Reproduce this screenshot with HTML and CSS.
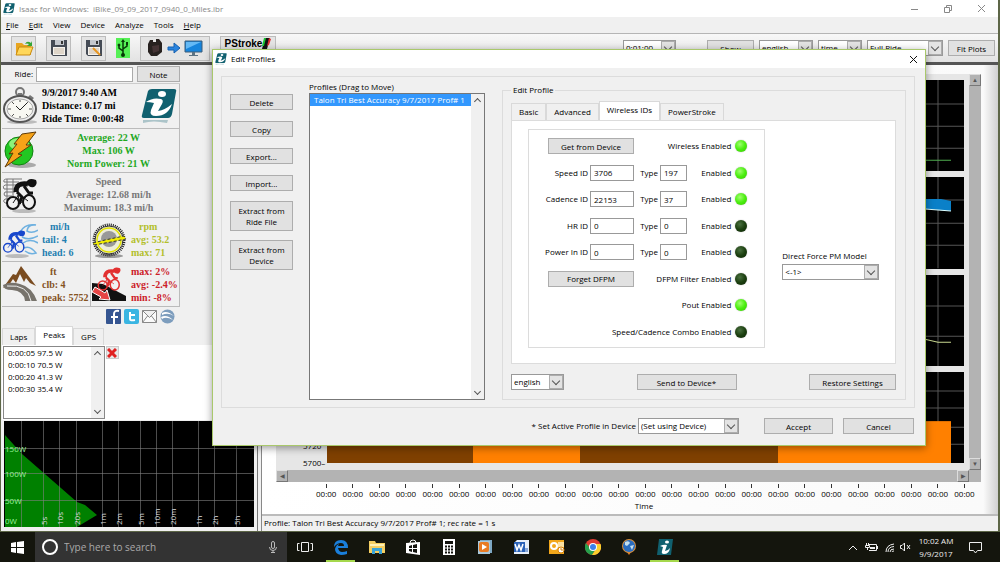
FILE: index.html
```html
<!DOCTYPE html>
<html lang="en">
<head>
    <meta charset="UTF-8">
    <meta name="viewport" content="width=device-width, initial-scale=1.0">
    <title>Isaac for Windows</title>
    <link rel="stylesheet" href="styles.css">
</head>
<body>
    <svg class="defs" aria-hidden="true">
        <symbol id="ibike" viewBox="0 0 36 36">
            <path d="M7 3Q8 1 11 1H33Q36 1 35 4L31 26Q30 30 27 30H3Q0 30 1 27Z" fill="#10606f"/>
            <ellipse cx="21" cy="6" rx="4" ry="3" fill="#fff"/>
            <path d="M5 14Q12 9 20 11Q23 12 21 16L17 23Q24 22 31 16Q27 28 15 28Q8 28 10 22L13 15Q9 14 5 14Z" fill="#fff"/>
            <path d="M2 32H27L26 35Q12 32 2 35Z" fill="#10606f" opacity=".3"/>
        </symbol>
        <symbol id="rider" viewBox="0 0 36 36">
            <g fill="none" stroke="currentColor">
                <ellipse cx="11" cy="26" rx="6" ry="6" stroke-width="2"/>
                <ellipse cx="27" cy="25" rx="6" ry="7" stroke-width="2"/>
                <path d="M11 26L17 17L26 24M16 18L18 27L27 16" stroke-width="1"/>
                <path d="M15 15L20 20L17 27M22 9L27 16H31" stroke-width="3"/>
                <path d="M14 15Q14 5 26 7" stroke-width="5"/>
            </g>
            <path d="M24 6Q26 0 34 3Q36 7 32 10Q27 11 24 6Z" fill="currentColor"/>
        </symbol>
        <symbol id="floppy" viewBox="0 0 18 18">
            <path d="M1 1H17V17H3L1 15Z" fill="#454b55"/>
            <path d="M5 1H14V6H5Z" fill="#c4c8ce"/>
            <path d="M11 2H13V5H11Z" fill="#333"/>
            <path d="M3 8H15V16H3Z" fill="#f4f2ee"/>
            <path d="M4 10H14M4 12H14M4 14H14" stroke="#c9b9a5"/>
        </symbol>
    </svg>

    <div class="window">
        <header class="titlebar">
            <svg class="app-icon"><use href="#ibike"/></svg>
            <span class="title">Isaac for Windows:&nbsp; iBike_09_09_2017_0940_0_Miles.ibr</span>
            <svg class="window-controls" viewBox="0 0 80 12" fill="none" stroke="#888">
                <path d="M3 6.500H10"/>
                <path d="M36.500 4.500H41.500V9.500H36.500ZM38.500 4.500V2.500H43.500V7.500H41.500"/>
                <path d="M70 2L77 9M77 2L70 9"/>
            </svg>
        </header>

        <nav class="menubar">
            <a href="#"><u>F</u>ile</a>
            <a href="#"><u>E</u>dit</a>
            <a href="#">View</a>
            <a href="#">Device</a>
            <a href="#">Analyze</a>
            <a href="#">Tools</a>
            <a href="#"><u>H</u>elp</a>
        </nav>

        <div class="toolbar">
            <button class="tool" aria-label="Open">
                <svg width="20" height="18" viewBox="0 0 20 18">
                    <path d="M2 4H8L10 6H17V16H2Z" fill="#e8a520"/>
                    <path d="M2 16L5 8H19L16 16Z" fill="#ffd75a" stroke="#c98a10"/>
                    <path d="M11 5Q13 1 17 4L18 2V7H13L15 5Q13 4 11 5" fill="#35a535"/>
                </svg>
            </button>
            <button class="tool" aria-label="Save"><svg width="18" height="18"><use href="#floppy"/></svg></button>
            <button class="tool" aria-label="Save as">
                <svg width="18" height="18" viewBox="0 0 18 18"><use href="#floppy"/><path d="M8 9L15 16" stroke="#e89520" stroke-width="2"/></svg>
            </button>
            <svg class="usb" viewBox="0 0 14 20" fill="none" stroke="#073807">
                <path d="M7 3V16M7 13L3 10V7M7 11L11 8V6" stroke-width="1.500"/>
                <path d="M7 1L9 4H5ZM10 4H12V7H10Z" fill="#073807" stroke="none"/>
                <circle cx="7" cy="17" r="2" fill="#073807" stroke="none"/>
                <circle cx="3" cy="7" r="1" fill="#073807"/>
            </svg>
            <button class="tool tool-wide" aria-label="Download ride">
                <svg width="56" height="20" viewBox="0 0 56 20">
                    <path d="M3 2H6V4H9V1H12L15 5V14L10 18H4L1 14V6Z" fill="#27211f"/>
                    <path d="M5 8L12 7V13L6 15Z" fill="#443334"/>
                    <path d="M21 9H27V5L33 10L27 15V12H21Z" fill="#2a84df" stroke="#1560b0"/>
                    <path d="M38 3H55V14H38Z" fill="#1684dc" stroke="#3d5d78"/>
                    <path d="M39 4H54L39 11Z" fill="#64b9f5"/>
                    <path d="M45 14H48V17H51V18H42V17H45Z" fill="#5c7384"/>
                </svg>
            </button>
            <button class="pstroke">PStroke
                <svg width="9" height="11" viewBox="0 0 9 11"><path d="M3 0H8L5 11H0Z" fill="#111"/><path d="M2 0H4L2 8H0Z" fill="#19c832"/><path d="M7 0L9 1L7 7L5 8Z" fill="#e03030"/></svg>
            </button>
            <div class="toolbar-right">
                <span class="select zoom-time"><select aria-label="Zoom"><option>0:01:00</option></select></span>
                <button class="btn show">Show</button>
                <span class="select units"><select aria-label="Units"><option>english</option></select></span>
                <span class="select axis-type"><select aria-label="Axis"><option>time</option></select></span>
                <span class="select range"><select aria-label="Range"><option>Full Ride</option></select></span>
                <button class="btn fit">Fit Plots</button>
            </div>
        </div>

        <main class="workspace">
            <aside class="sidebar">
                <div class="ride-row">
                    <label for="ride">Ride:</label>
                    <input id="ride" type="text">
                    <button class="btn">Note</button>
                </div>

                <div class="stats">
                    <section class="stat">
                        <svg class="stat-icon" viewBox="0 0 36 38">
                            <ellipse cx="20" cy="35" rx="15" ry="2" fill="#bbb"/>
                            <circle cx="18" cy="5" r="4" fill="none" stroke="#777" stroke-width="2"/>
                            <path d="M16 6H20V11H16ZM28 8L32 11L30 13L26 10Z" fill="#777"/>
                            <ellipse cx="18" cy="22" rx="16" ry="13" fill="#eee" stroke="#555" stroke-width="2"/>
                            <ellipse cx="18" cy="22" rx="13" ry="10" fill="#f8f8f2" stroke="#aaa"/>
                            <path d="M18 13V15M18 29V31M6 22H9M27 22H30M10 15L12 17M26 15L24 17M10 29L12 27M26 29L24 27" stroke="#555"/>
                            <path d="M18 23L14 19M18 23L25 16" stroke="#222"/>
                        </svg>
                        <div class="stat-text left">9/9/2017 9:40 AM<br>Distance: 0.17 mi<br>Ride Time: 0:00:48</div>
                        <svg class="brand"><use href="#ibike"/></svg>
                    </section>
                    <section class="stat power">
                        <svg class="stat-icon" viewBox="0 0 36 38">
                            <ellipse cx="20" cy="34" rx="14" ry="3" fill="#aaa"/>
                            <circle cx="17" cy="20" r="14" fill="#22c722" stroke="#128012"/>
                            <ellipse cx="17" cy="13" rx="10" ry="6" fill="#8df27a"/>
                            <path d="M20 3L34 1L24 14H29L16 23L20 24L3 36L11 22L7 23L15 13H12Z" fill="#f6a318" stroke="#5e3a08"/>
                        </svg>
                        <div class="stat-text">Average: 22 W<br>Max: 106 W<br>Norm Power: 21 W</div>
                    </section>
                    <section class="stat speed">
                        <svg class="stat-icon" viewBox="0 0 36 38">
                            <path d="M20 3H5Q1 3 2 6H17M15 9H3Q0 10 2 13H15M13 16H3Q1 18 3 20H10M8 23H3Q0 25 3 27H6M5 3V27M11 3V20" fill="none" stroke="#777"/>
                            <ellipse cx="22" cy="35" rx="12" ry="2" fill="#bbb"/>
                            <use href="#rider" class="black"/>
                        </svg>
                        <div class="stat-text">Speed<br>Average: 12.68 mi/h<br>Maximum: 18.3 mi/h</div>
                    </section>
                    <section class="stat wind">
                        <svg class="stat-icon" viewBox="0 0 36 38">
                            <ellipse cx="15" cy="35" rx="12" ry="2" fill="#bbb"/>
                            <path d="M18 11Q23 2 34 4Q26 3 25 10Q30 13 36 9M20 16Q27 20 36 15M21 22Q28 17 36 22M22 27Q28 24 34 32Q28 34 23 30" fill="none" stroke="#6fb1e0" stroke-width="1.500"/>
                            <use href="#rider" class="blue" x="-2" y="6" width="26" height="30"/>
                        </svg>
                        <div class="stat-text left"><span class="unit">mi/h</span>tail: 4<br>head: 6</div>
                    </section>
                    <section class="stat cadence">
                        <svg class="stat-icon" viewBox="0 0 36 38">
                            <ellipse cx="18" cy="35" rx="14" ry="2" fill="#999"/>
                            <circle cx="18" cy="19" r="15" fill="none" stroke="#222" stroke-width="3" stroke-dasharray="1 1"/>
                            <circle cx="18" cy="19" r="14" fill="#ededda" stroke="#333"/>
                            <circle cx="18" cy="19" r="12" fill="none" stroke="#e2e200" stroke-width="1.500"/>
                            <circle cx="18" cy="18" r="8" fill="#999"/>
                            <path d="M2 22L14 19L33 15L35 18L20 21L3 24Z" fill="#f0ec00" stroke="#333" stroke-dasharray="3 2"/>
                        </svg>
                        <div class="stat-text left"><span class="unit">rpm</span>avg: 53.2<br>max: 71</div>
                    </section>
                    <section class="stat climb">
                        <svg class="stat-icon" viewBox="0 0 36 38">
                            <path d="M1 23L11 9L14 10L19 1L34 21L28 18L24 13L22 17L18 9L14 18L11 14L7 20Z" fill="#7a4c20"/>
                            <path d="M1 20Q8 16 18 19Q30 22 35 36H23Q22 26 10 25Q1 25 1 20Z" fill="#77736c"/>
                            <path d="M5 21Q26 19 29 36" fill="none" stroke="#eee"/>
                        </svg>
                        <div class="stat-text left"><span class="unit">ft</span>clb: 4<br>peak: 5752</div>
                    </section>
                    <section class="stat grade">
                        <svg class="stat-icon" viewBox="0 0 36 38">
                            <path d="M1 18L12 19L35 31V36H1Z" fill="#111"/>
                            <use href="#rider" class="red" y="1" width="34" height="27"/>
                            <path d="M4 22L14 28L16 25L19 35L8 34L10 32L1 27Z" fill="#e64545" stroke="#fff"/>
                        </svg>
                        <div class="stat-text left">max: 2%<br>avg: -2.4%<br>min: -8%</div>
                    </section>
                </div>

                <div class="share">
                    <a href="#" aria-label="Facebook"><svg viewBox="0 0 15 15"><rect width="15" height="15" rx="1" fill="#355591"/><path d="M13 2Q8 1 8 5V15M5 8H12" stroke="#fff" stroke-width="2" fill="none"/></svg></a>
                    <a href="#" aria-label="Twitter"><svg viewBox="0 0 15 15"><rect width="15" height="15" rx="2" fill="#3ab5e2"/><path d="M6 3V10Q6 12 11 11M6 6H11" stroke="#fff" stroke-width="2" fill="none"/></svg></a>
                    <a href="#" aria-label="Mail"><svg viewBox="0 0 15 15"><path d="M.5 1.500H14.500V13.500H.5ZL7.500 8.500L14.500 1.500M.5 13.500L5.500 7M14.500 13.500L9.500 7" fill="#fafafa" stroke="#888"/></svg></a>
                    <a href="#" aria-label="Google Earth"><svg viewBox="0 0 15 15"><circle cx="7.500" cy="7.500" r="7" fill="#7d9dbd"/><path d="M2 4Q7 1 14 7Q8 3 2 6ZM1 8Q7 5 13 11Q6 7 2 10Z" fill="#fff"/></svg></a>
                </div>

                <div class="tabs side-tabs">
                    <button class="tab">Laps</button>
                    <button class="tab active">Peaks</button>
                    <button class="tab">GPS</button>
                </div>
                <div class="peaks">
                    <div class="listbox">
                        <ul>
                            <li>0:00:05 97.5 W</li>
                            <li>0:00:10 70.5 W</li>
                            <li>0:00:20 41.3 W</li>
                            <li>0:00:30 35.4 W</li>
                        </ul>
                        <div class="scroll"><i class="up"></i><i class="down"></i></div>
                    </div>
                    <button class="remove" aria-label="Remove"><svg viewBox="0 0 10 10"><path d="M1 1L9 9M9 1L1 9" stroke="#e02222" stroke-width="3"/></svg></button>
                </div>

                <svg class="power-chart" viewBox="0 0 250 106">
                    <rect width="250" height="106" fill="#000"/>
                    <path d="M1 14L18 33L73 81L81 84L93 94L73 106H1Z" fill="#008000"/>
                    <path d="M17.500 0V106M39.500 0V106M55.500 0V106M72.500 0V106M98.500 0V106M114.500 0V106M136.500 0V106M152.500 0V106M168.500 0V106M194.500 0V106M210.500 0V106M232.500 0V106M0 27.500H250M0 52.500H250M0 79.500H250" stroke="#808080" stroke-opacity=".6"/>
                    <g fill="#9cf59c">
                        <text x="1" y="31">150W</text>
                        <text x="1" y="56">100W</text>
                        <text x="1" y="83">50W</text>
                        <text x="1" y="103">0W</text>
                    </g>
                    <g fill="#ddd">
                        <text transform="translate(43 104) rotate(-90)">5s</text>
                        <text transform="translate(59 104) rotate(-90)">10s</text>
                        <text transform="translate(76 104) rotate(-90)">20s</text>
                        <text transform="translate(102 104) rotate(-90)">1m</text>
                        <text transform="translate(118 104) rotate(-90)">2m</text>
                        <text transform="translate(140 104) rotate(-90)">5m</text>
                        <text transform="translate(156 104) rotate(-90)">10m</text>
                        <text transform="translate(172 104) rotate(-90)">20m</text>
                        <text transform="translate(198 104) rotate(-90)">1h</text>
                        <text transform="translate(214 104) rotate(-90)">2h</text>
                        <text transform="translate(236 104) rotate(-90)">5h</text>
                    </g>
                </svg>
            </aside>

            <section class="content">
                <div class="plots-frame">
                    <div class="plots-row">
                        <div class="plots">
                            <svg viewBox="0 0 637 91" preserveAspectRatio="none">
                                <path d="M0 24H637M0 46H637M0 68H637M611 0V91" stroke="#555"/>
                                <path d="M0 80H624" stroke="#4fae4f"/>
                            </svg>
                            <svg viewBox="0 0 637 91" preserveAspectRatio="none">
                                <path d="M0 23H637M0 46H637M0 68H637M611 0V91" stroke="#555"/>
                                <path d="M0 22H614L624 24V34L600 32H0Z" fill="#0a80c8"/>
                                <path d="M598 32L624 34" stroke="#dff"/>
                            </svg>
                            <svg viewBox="0 0 637 91" preserveAspectRatio="none">
                                <path d="M0 31H637M0 61H637M611 0V91" stroke="#555"/>
                                <path d="M0 64H598L611 67H624" stroke="#c8d890" fill="none"/>
                            </svg>
                            <svg viewBox="0 0 637 91" preserveAspectRatio="none">
                                <path d="M0 19H637M0 36H637M0 55H637M0 72H637M611 0V91" stroke="#555"/>
                                <rect y="49" width="146" height="42" fill="#7f4000"/>
                                <rect x="146" y="49" width="107" height="42" fill="#ff8000"/>
                                <rect x="253" y="49" width="198" height="42" fill="#7f4000"/>
                                <rect x="451" y="49" width="173" height="42" fill="#ff8000"/>
                            </svg>
                            <span class="y-label">5700–</span>
                            <span class="y-label upper">5720</span>
                        </div>
                        <div class="vscroll"><i>▲</i><i>▼</i></div>
                    </div>
                    <div class="hscroll"><i>◀</i><i>▶</i></div>
                </div>
                <div class="time-axis">
                    <span>00:00</span><span>00:00</span><span>00:00</span><span>00:00</span><span>00:00</span>
                    <span>00:00</span><span>00:00</span><span>00:00</span><span>00:00</span><span>00:00</span>
                    <span>00:00</span><span>00:00</span><span>00:00</span><span>00:00</span><span>00:00</span>
                    <span>00:00</span><span>00:00</span><span>00:00</span><span>00:00</span><span>00:00</span>
                    <span>00:00</span><span>00:00</span><span>00:00</span><span>00:00</span><span>00:00</span>
                </div>
                <div class="axis-title">Time</div>
                <footer class="statusbar">Profile: Talon Tri Best Accuracy 9/7/2017 Prof# 1; rec rate = 1 s</footer>
            </section>
        </main>
    </div>

    <div class="dialog" role="dialog" aria-labelledby="dialog-title">
        <header class="dialog-title">
            <svg class="app-icon"><use href="#ibike"/></svg>
            <span id="dialog-title">Edit Profiles</span>
            <button class="close" aria-label="Close"><svg viewBox="0 0 9 9"><path d="M1 1L8 8M8 1L1 8" stroke="#111"/></svg></button>
        </header>

        <div class="dialog-body">
            <div class="profile-actions">
                <button class="btn">Delete</button>
                <button class="btn">Copy</button>
                <button class="btn">Export...</button>
                <button class="btn">Import...</button>
                <button class="btn tall">Extract from<br>Ride File</button>
                <button class="btn tall">Extract from<br>Device</button>
            </div>

            <div class="profiles">
                <h2>Profiles (Drag to Move)</h2>
                <div class="listbox">
                    <ul>
                        <li class="selected">Talon Tri Best Accuracy 9/7/2017 Prof# 1</li>
                    </ul>
                    <div class="scroll"><i class="up"></i><i class="down"></i></div>
                </div>
            </div>

            <fieldset class="edit-profile">
                <legend>Edit Profile</legend>
                <div class="tabs">
                    <button class="tab">Basic</button>
                    <button class="tab">Advanced</button>
                    <button class="tab active">Wireless IDs</button>
                    <button class="tab">PowerStroke</button>
                </div>
                <div class="tab-page">
                    <form class="wireless">
                        <button type="button" class="btn wide">Get from Device</button>
                        <label class="led-label" for="wireless-on">Wireless Enabled</label>
                        <input class="led" type="checkbox" id="wireless-on" checked>

                        <label for="speed-id">Speed ID</label>
                        <input type="text" id="speed-id" value="3706">
                        <label for="speed-type">Type</label>
                        <input type="text" id="speed-type" value="197">
                        <label class="led-label" for="speed-on">Enabled</label>
                        <input class="led" type="checkbox" id="speed-on" checked>

                        <label for="cadence-id">Cadence ID</label>
                        <input type="text" id="cadence-id" value="22153">
                        <label for="cadence-type">Type</label>
                        <input type="text" id="cadence-type" value="37">
                        <label class="led-label" for="cadence-on">Enabled</label>
                        <input class="led" type="checkbox" id="cadence-on" checked>

                        <label for="hr-id">HR ID</label>
                        <input type="text" id="hr-id" value="0">
                        <label for="hr-type">Type</label>
                        <input type="text" id="hr-type" value="0">
                        <label class="led-label" for="hr-on">Enabled</label>
                        <input class="led" type="checkbox" id="hr-on">

                        <label for="power-id">Power In ID</label>
                        <input type="text" id="power-id" value="0">
                        <label for="power-type">Type</label>
                        <input type="text" id="power-type" value="0">
                        <label class="led-label" for="power-on">Enabled</label>
                        <input class="led" type="checkbox" id="power-on">

                        <button type="button" class="btn wide">Forget DFPM</button>
                        <label class="led-label" for="filter-on">DFPM Filter Enabled</label>
                        <input class="led" type="checkbox" id="filter-on">

                        <label class="led-label full" for="pout-on">Pout Enabled</label>
                        <input class="led" type="checkbox" id="pout-on" checked>

                        <label class="led-label full" for="combo-on">Speed/Cadence Combo Enabled</label>
                        <input class="led" type="checkbox" id="combo-on">
                    </form>
                    <div class="model">
                        <label for="model">Direct Force PM Model</label>
                        <span class="select"><select id="model"><option>&lt;-1&gt;</option></select></span>
                    </div>
                </div>
                <div class="profile-footer">
                    <span class="select language"><select aria-label="Profile units"><option>english</option></select></span>
                    <button class="btn send">Send to Device*</button>
                    <button class="btn restore">Restore Settings</button>
                </div>
            </fieldset>
        </div>

        <footer class="dialog-footer">
            <label for="active-profile">* Set Active Profile in Device</label>
            <span class="select active-profile"><select id="active-profile"><option>(Set using Device)</option></select></span>
            <button class="btn accept">Accept</button>
            <button class="btn cancel">Cancel</button>
        </footer>
    </div>

    <footer class="taskbar">
        <button class="start" aria-label="Start"><svg width="13" height="13" viewBox="0 0 13 13" fill="#fff"><path d="M0 2L5 1V6H0ZM6 1L13 0V6H6ZM0 7H5V12L0 11ZM6 7H13V13L6 12Z"/></svg></button>
        <div class="search">
            <svg width="16" height="16" viewBox="0 0 16 16"><circle cx="8" cy="8" r="7" fill="none" stroke="#fff" stroke-width="2"/></svg>
            <input type="text" aria-label="Search" placeholder="Type here to search">
            <svg width="8" height="12" viewBox="0 0 8 12" fill="none" stroke="#bbb"><rect x="2.500" y=".5" width="3" height="7" rx="1.500"/><path d="M.5 6Q.5 9.500 4 9.500T7.500 6M4 9.500V12M2 11.500H6"/></svg>
        </div>
        <div class="apps">
            <button aria-label="Task view"><svg viewBox="0 0 16 16" fill="none" stroke="#eee"><path d="M4.500 3.500H11.500V12.500H4.500ZM2.500 4.500H.5V11.500H2.500M13.500 4.500H15.500V11.500H13.500"/></svg></button>
            <button class="running" aria-label="Edge"><svg viewBox="0 0 16 16"><path d="M1 8Q1 1 8 1Q15 1 15 9H5Q6 13 9 13Q12 13 14 12V15Q11 16 8 16Q2 15 2 10Q3 6 6 5Q5 7 5 7H11Q11 4 8 4Q4 4 1 8Z" fill="#1a7fdb"/></svg></button>
            <button aria-label="File Explorer"><svg viewBox="0 0 16 16"><path d="M0 2H6L7 4H16V14H0Z" fill="#f4ce62"/><path d="M1 5H15V7H1Z" fill="#fff0b5"/><path d="M3 9H13V15H10V12H6V15H3Z" fill="#3aa4d8"/></svg></button>
            <button aria-label="Store"><svg viewBox="0 0 16 16"><path d="M1 4L15 3V16L1 14Z" fill="#fff"/><path d="M5 4Q5 1 8 1Q11 1 11 4" fill="none" stroke="#fff"/><path d="M4 7L7 6V9H4ZM8 6L12 5V9H8ZM4 10H7V13L4 12ZM8 10H12V14L8 13Z" fill="#14140f"/></svg></button>
            <button aria-label="Calculator"><svg viewBox="0 0 16 16"><path d="M2 0H14V16H2Z" fill="#fff"/><path d="M4 2H12V5H4Z" fill="#14140f"/><path d="M4 7.500H12M4 10.500H12M4 13.500H12" stroke="#14140f" stroke-width="2" stroke-dasharray="2 1"/></svg></button>
            <button aria-label="Media player"><svg viewBox="0 0 16 16"><path d="M3 1H15V14H3Z" fill="#7ea8c4"/><path d="M1 2H13V15H1Z" fill="#a9c9dc"/><rect x="2" y="3" width="10" height="10" rx="2" fill="#e87b24"/><path d="M5 5L10 8L5 11Z" fill="#fff"/></svg></button>
            <button aria-label="Word"><svg viewBox="0 0 16 16"><path d="M4 1H16V15H1V4Z" fill="#e8f0fa"/><path d="M1 3H12V13H1Z" fill="#2a62b8"/><path d="M2 5L4 11L6 6L8 11L10 5" fill="none" stroke="#fff" stroke-width="1.500"/><path d="M12 10H15M12 12H15" stroke="#2a62b8"/></svg></button>
            <button aria-label="Outlook"><svg viewBox="0 0 16 16"><path d="M0 1H15V15H0Z" fill="#f2a71b"/><circle cx="5" cy="7" r="3" fill="none" stroke="#fff" stroke-width="2"/><path d="M9 3H15V8H9Z" fill="#fbe1a2"/><circle cx="12" cy="11" r="3" fill="#fff" stroke="#d98510"/><path d="M12 9V11H14" stroke="#d98510" fill="none"/></svg></button>
            <button aria-label="Chrome"><svg viewBox="0 0 16 16"><circle cx="8" cy="8" r="8" fill="#e03c31"/><path d="M1 4A8 8 0 0 0 7 16L11 10L5 9Z" fill="#26a04c"/><path d="M8 5H15.500A8 8 0 0 1 7 16L11 10Z" fill="#fbcf2c"/><circle cx="8" cy="8" r="4" fill="#fff"/><circle cx="8" cy="8" r="3" fill="#3d80ea"/></svg></button>
            <button aria-label="Maps"><svg viewBox="0 0 16 16"><path d="M3 9H13L8 16Z" fill="#e8842a"/><circle cx="8" cy="7" r="7" fill="#d8903e"/><circle cx="8" cy="7" r="6" fill="#2a6dc0"/><path d="M4 3Q8 1 9 4L6 7L4 6ZM9 7L13 6L11 11Z" fill="#c4dff0"/></svg></button>
            <button class="running" aria-label="Isaac"><svg viewBox="0 0 16 16"><path d="M2 0H16L14 16H0Z" fill="#10606f"/><ellipse cx="10" cy="3" rx="2" ry="1.500" fill="#fff"/><path d="M3 7Q7 5 10 6L8 12Q11 12 13 9Q12 15 7 15Q4 15 5 12L6 8Z" fill="#fff"/></svg></button>
        </div>
        <div class="tray">
            <svg width="60" height="12" viewBox="0 0 60 12" fill="none" stroke="#eee">
                <path d="M0 9L4 5L8 9"/>
                <path d="M19 3.500H27.500V9.500H20M28.500 5V8M17.500 2V4M19.500 2V4M16.500 4.500H20.500V6.500H16.500ZM18.500 7V9"/>
                <path d="M21 6H26V8H21Z" fill="#eee" stroke="none"/>
                <path d="M37 11Q37 4 45 3M39 11Q39 6 45 5.500M41 11Q41 8 45 8M43 11Q43 10 45 10"/>
                <path d="M51.500 4.500H53L55.500 2V10L53 7.500H51.500ZM58 4L61 8M61 4L58 8"/>
            </svg>
            <div class="clock">10:02 AM<br>9/9/2017</div>
            <svg class="notify" width="13" height="13" viewBox="0 0 13 13" fill="none" stroke="#eee"><path d="M.5 1.500H12.500V9.500H8.500L6.500 12L4.500 9.500H.5Z"/></svg>
        </div>
    </footer>
</body>
</html>
```
FILE: styles.css
```css
* {
    box-sizing: border-box;
}

body {
    margin: 0;
    height: 100vh;
    display: flex;
    flex-direction: column;
    overflow: hidden;
    position: relative;
    background: #f0f0f0;
    font-family: "Open Sans", "Noto Sans", sans-serif;
    font-size: 8px;
    line-height: 12px;
    color: #000;
}

button,
input,
select {
    font: inherit;
    color: inherit;
    margin: 0;
    padding: 0;
    border-radius: 0;
}

svg {
    display: block;
    flex: none;
}

ul {
    list-style: none;
    margin: 0;
    padding: 0;
}

.defs {
    position: absolute;
    width: 0;
    height: 0;
}

.window {
    flex: 1;
    min-height: 0;
    display: flex;
    flex-direction: column;
    border: solid #5d6647;
    border-width: 0 2px 1px 1px;
}

/* title and menu */
.titlebar {
    height: 17px;
    display: flex;
    align-items: center;
    gap: 4px;
    padding: 0 10px 0 2px;
    background: #fff;
    color: #888;
}

.app-icon {
    width: 12px;
    height: 14px;
}

.title {
    flex: 1;
}

.window-controls {
    width: 80px;
    height: 12px;
}

.menubar {
    height: 17px;
    display: flex;
    align-items: center;
    gap: 10px;
    padding: 0 5px;
    border-bottom: 1px solid #b5b5b5;
}

.menubar a {
    color: inherit;
    text-decoration: none;
}

/* toolbar */
.toolbar {
    height: 31px;
    display: flex;
    align-items: center;
    gap: 10px;
    padding: 0 3px 0 10px;
    background: linear-gradient(#f8f8f8, #e2e2e2);
    border-bottom: 3px solid #555;
}

.tool,
.pstroke {
    height: 25px;
    width: 25px;
    display: flex;
    align-items: center;
    justify-content: center;
    border: 1px solid #bcbcbc;
    background: #e4e4e4;
}

.usb {
    width: 14px;
    height: 20px;
    background: #55f055;
}

.tool-wide {
    width: 70px;
}

.pstroke {
    width: 56px;
    align-items: flex-start;
    padding-top: 1px;
    font-family: "Liberation Sans", Arial, sans-serif;
    font-weight: bold;
    font-size: 10px;
}

.toolbar-right {
    margin-left: auto;
    display: flex;
    gap: 5px;
}

.zoom-time {
    width: 53px;
    margin-right: 26px;
}

.show {
    width: 47px;
}

.units {
    width: 54px;
}

.axis-type {
    width: 44px;
}

.range {
    width: 76px;
}

.fit {
    width: 47px;
}

.btn {
    height: 16px;
    border: 1px solid #adadad;
    background: #e1e1e1;
    text-align: center;
    line-height: 11px;
}

.select {
    position: relative;
    display: block;
    height: 16px;
}

.select select {
    width: 100%;
    height: 100%;
    padding: 0 14px 0 2px;
    border: 1px solid #999;
    background: #fff;
    appearance: none;
}

.select::before {
    content: "";
    position: absolute;
    top: 1px;
    right: 1px;
    bottom: 1px;
    width: 12px;
    border: 1px solid #adadad;
    background: #e3e3e3;
    pointer-events: none;
}

.select::after,
.scroll i {
    content: "";
    width: 5px;
    height: 5px;
    border: solid #555;
    border-width: 0 1px 1px 0;
    transform: rotate(45deg);
}

.select::after {
    position: absolute;
    top: 4px;
    right: 5px;
    pointer-events: none;
}

/* left column */
.workspace {
    flex: 1;
    min-height: 0;
    display: flex;
}

.sidebar {
    width: 257px;
    flex: none;
    display: flex;
    flex-direction: column;
    border-right: 1px solid #777;
    padding-left: 1px;
}

.ride-row {
    width: 178px;
    height: 18px;
    display: flex;
    align-items: center;
    gap: 3px;
}

.ride-row label {
    width: 31px;
    text-align: right;
}

.ride-row input {
    width: 97px;
    height: 15px;
    border: 1px solid #aaa;
}

.ride-row .btn {
    flex: 1;
    margin-left: 1px;
}

.stats {
    width: 178px;
    height: 224px;
    display: grid;
    grid-template-columns: 1fr 1fr;
    grid-auto-rows: 1fr;
    border-top: 1px solid #ccc;
    font-family: "Liberation Serif", serif;
    font-weight: bold;
    font-size: 10px;
    line-height: 13px;
}

.stat {
    display: flex;
    align-items: center;
    grid-column: span 2;
    border: solid #bbb;
    border-width: 0 1px 1px 0;
}

.wind,
.cadence,
.climb,
.grade {
    grid-column: span 1;
}

.stat-icon {
    width: 36px;
    height: 38px;
}

.brand {
    width: 36px;
    height: 36px;
    margin: 0 2px 0 auto;
}

.stat-text {
    flex: 1;
    text-align: center;
    white-space: nowrap;
}

.stat-text.left {
    text-align: left;
    padding-left: 4px;
}

.unit {
    display: block;
    padding-left: 8px;
}

.power {
    color: #1fa81f;
}

.speed {
    color: #777;
}

.wind {
    color: #1f7fb0;
}

.cadence {
    color: #b3bf2b;
}

.climb {
    color: #85531f;
}

.grade {
    color: #cc2028;
}

.black {
    color: #111;
}

.blue {
    color: #1847cc;
}

.red {
    color: #e23030;
}

.share {
    display: flex;
    gap: 3px;
    padding: 2px 0 2px 104px;
}

.share svg {
    width: 15px;
    height: 15px;
}

.tabs {
    display: flex;
    align-items: flex-end;
}

.tab {
    height: 17px;
    padding: 0 7px;
    border: 1px solid #d9d9d9;
    border-bottom: none;
    background: #f0f0f0;
}

.tab.active {
    height: 19px;
    background: #fff;
    padding-bottom: 3px;
}

.side-tabs {
    height: 19px;
}

.peaks {
    height: 75px;
    display: flex;
    align-items: flex-start;
    gap: 1px;
    padding: 1px;
    background: #fff;
}

.listbox {
    display: flex;
    border: 1px solid #888;
    background: #fff;
}

.listbox ul {
    flex: 1;
    min-width: 0;
}

.listbox li {
    padding-left: 4px;
    white-space: nowrap;
    overflow: hidden;
}

.scroll {
    width: 13px;
    display: flex;
    flex-direction: column;
    justify-content: space-between;
    align-items: center;
    padding: 5px 0;
    background: #f0f0f0;
}

.scroll .up {
    transform: rotate(225deg);
}

.peaks .listbox {
    width: 102px;
    height: 73px;
}

.remove {
    width: 13px;
    height: 13px;
    border: 1px solid #ccc;
    background: #e8e8e8;
}

.remove svg {
    width: 10px;
    height: 10px;
}

.power-chart {
    width: 250px;
    height: 106px;
    margin: 1px 0 0 2px;
}

/* ride plots */
.content {
    flex: 1;
    min-width: 0;
    display: flex;
    flex-direction: column;
    margin-left: 3px;
    border-left: 1px solid #888;
    background: linear-gradient(to right, #fff, #fafafa 98%, #d0d0d0);
}

.plots-frame {
    flex: 1;
    min-height: 0;
    display: flex;
    flex-direction: column;
    margin: 9px 17px 0 14px;
    background: #e6e6e6;
}

.plots-row {
    flex: 1;
    min-height: 0;
    display: flex;
}

.plots {
    position: relative;
    flex: 1;
    display: flex;
    flex-direction: column;
    gap: 6px;
    padding: 6px 5px 7px 51px;
}

.plots svg {
    flex: 1;
    min-height: 0;
    width: 100%;
    background: #000;
}

.y-label {
    position: absolute;
    left: 27px;
    bottom: 1px;
}

.y-label.upper {
    bottom: 18px;
}

.vscroll,
.hscroll {
    display: flex;
    justify-content: space-between;
    background: #b3b3b3;
}

.vscroll {
    width: 12px;
    flex-direction: column;
}

.hscroll {
    height: 12px;
    padding-right: 12px;
}

.vscroll i,
.hscroll i {
    width: 12px;
    height: 12px;
    border: 1px solid;
    border-color: #ddd #777 #777 #ddd;
    color: #555;
    font-size: 6px;
    line-height: 10px;
    font-style: normal;
    text-align: center;
}

.time-axis {
    display: flex;
    justify-content: space-between;
    margin: 2px 23px 0 54px;
}

.time-axis span::before {
    content: "";
    display: block;
    width: 1px;
    height: 4px;
    margin: 0 auto;
    background: #333;
}

.axis-title {
    padding-left: 28px;
    text-align: center;
}

.statusbar {
    height: 17px;
    margin-top: 2px;
    padding: 1px 2px;
    border-top: 2px solid #bbb;
    background: #f0f0f0;
}

/* edit profiles window */
.dialog {
    position: absolute;
    left: 212px;
    top: 49px;
    width: 714px;
    height: 397px;
    display: flex;
    flex-direction: column;
    border: 1px solid #a9c86b;
    background: #f0f0f0;
    box-shadow: 0 2px 8px rgba(0, 0, 0, 0.4);
}

.dialog-title {
    height: 18px;
    display: flex;
    align-items: center;
    gap: 4px;
    padding: 0 7px 0 2px;
    background: #fff;
}

.close {
    width: 9px;
    height: 9px;
    margin-left: auto;
    border: none;
    background: none;
}

.dialog-body {
    flex: 1;
    min-height: 0;
    display: flex;
    gap: 16px;
    margin: 8px 10px 0 8px;
    padding: 3px 8px 7px;
    border: 1px solid #dcdcdc;
}

.profile-actions {
    width: 63px;
    display: flex;
    flex-direction: column;
    gap: 11px;
    padding-top: 14px;
}

.tall {
    height: 30px;
    margin: -1px 0;
}

.profiles {
    width: 176px;
    display: flex;
    flex-direction: column;
}

.profiles h2 {
    margin: 0;
    font-size: 8px;
    font-weight: normal;
    line-height: 13px;
}

.profiles .listbox {
    flex: 1;
    border-color: #777;
}

.selected {
    background: #3297fd;
    color: #fff;
}

.edit-profile {
    flex: 1;
    min-width: 0;
    display: flex;
    flex-direction: column;
    margin: 4px 0 0 1px;
    padding: 5px 9px 9px 8px;
    border: 1px solid #dcdcdc;
}

.edit-profile legend {
    padding: 0 2px;
}

.tab-page {
    flex: 1;
    display: flex;
    align-items: center;
    gap: 17px;
    padding: 8px 16px 15px;
    border: 1px solid #dcdcdc;
    background: #fff;
}

.wireless {
    width: 238px;
    height: 100%;
    display: grid;
    grid-template-columns: 50px 44px 22px 27px 1fr 12px;
    grid-auto-rows: 16px;
    column-gap: 2px;
    align-content: space-between;
    align-items: center;
    padding: 8px 17px 7px 9px;
    border: 1px solid #dcdcdc;
    text-align: right;
}

.wireless input[type="text"] {
    width: 100%;
    height: 16px;
    padding: 0 3px;
    border: 1px solid #999;
    background: #fff;
}

.wireless .wide {
    grid-column: 1 / 3;
    width: 86px;
    justify-self: end;
}

.wide + .led-label {
    grid-column: 3 / 6;
}

.led-label {
    padding-right: 2px;
}

.led-label.full {
    grid-column: 1 / 6;
}

.led {
    width: 12px;
    height: 12px;
    border-radius: 50%;
    appearance: none;
    background: radial-gradient(circle at 40% 35%, #4a7040, #1c4010 50%, #0c2405);
    box-shadow: 0 0 1px #777;
}

.led:checked {
    background: radial-gradient(circle at 40% 35%, #a0ff70, #4bee10 50%, #35c800);
}

.model {
    width: 97px;
    padding-top: 52px;
    white-space: nowrap;
}

.model .select {
    margin-top: 2px;
}

.profile-footer,
.dialog-footer {
    display: flex;
    align-items: center;
}

.profile-footer {
    justify-content: space-between;
    padding-top: 10px;
}

.language {
    width: 53px;
}

.send {
    width: 100px;
}

.restore {
    width: 87px;
}

.dialog-footer {
    justify-content: flex-end;
    padding: 10px 11px 11px;
}

.active-profile {
    width: 101px;
    margin: 0 25px 0 2px;
}

.accept {
    width: 69px;
    margin-right: 10px;
}

.cancel {
    width: 71px;
}

/* taskbar */
.taskbar {
    height: 30px;
    display: flex;
    align-items: center;
    background: #14150d;
    color: #eee;
}

.taskbar button {
    border: none;
    background: none;
}

.start {
    width: 35px;
    display: flex;
    justify-content: center;
}

.search {
    width: 252px;
    height: 100%;
    display: flex;
    align-items: center;
    gap: 6px;
    padding: 0 10px 0 7px;
    background: #333;
}

.search input {
    flex: 1;
    min-width: 0;
    border: none;
    background: none;
    font-size: 10px;
}

.search input::placeholder {
    color: #aaa;
}

.apps {
    display: flex;
    height: 100%;
    gap: 7px;
    margin-left: 3px;
}

.apps button {
    width: 29px;
    display: flex;
    align-items: center;
    justify-content: center;
    border-bottom: 2px solid transparent;
    border-top: 2px solid transparent;
}

.apps .running {
    border-bottom-color: #a5d84c;
}

.apps svg {
    width: 16px;
    height: 16px;
}

.tray {
    margin-left: auto;
    display: flex;
    align-items: center;
    padding-right: 18px;
}

.tray svg {
    overflow: visible;
}

.clock {
    width: 54px;
    text-align: center;
    line-height: 13px;
}

.notify {
    margin-left: 6px;
}
```
